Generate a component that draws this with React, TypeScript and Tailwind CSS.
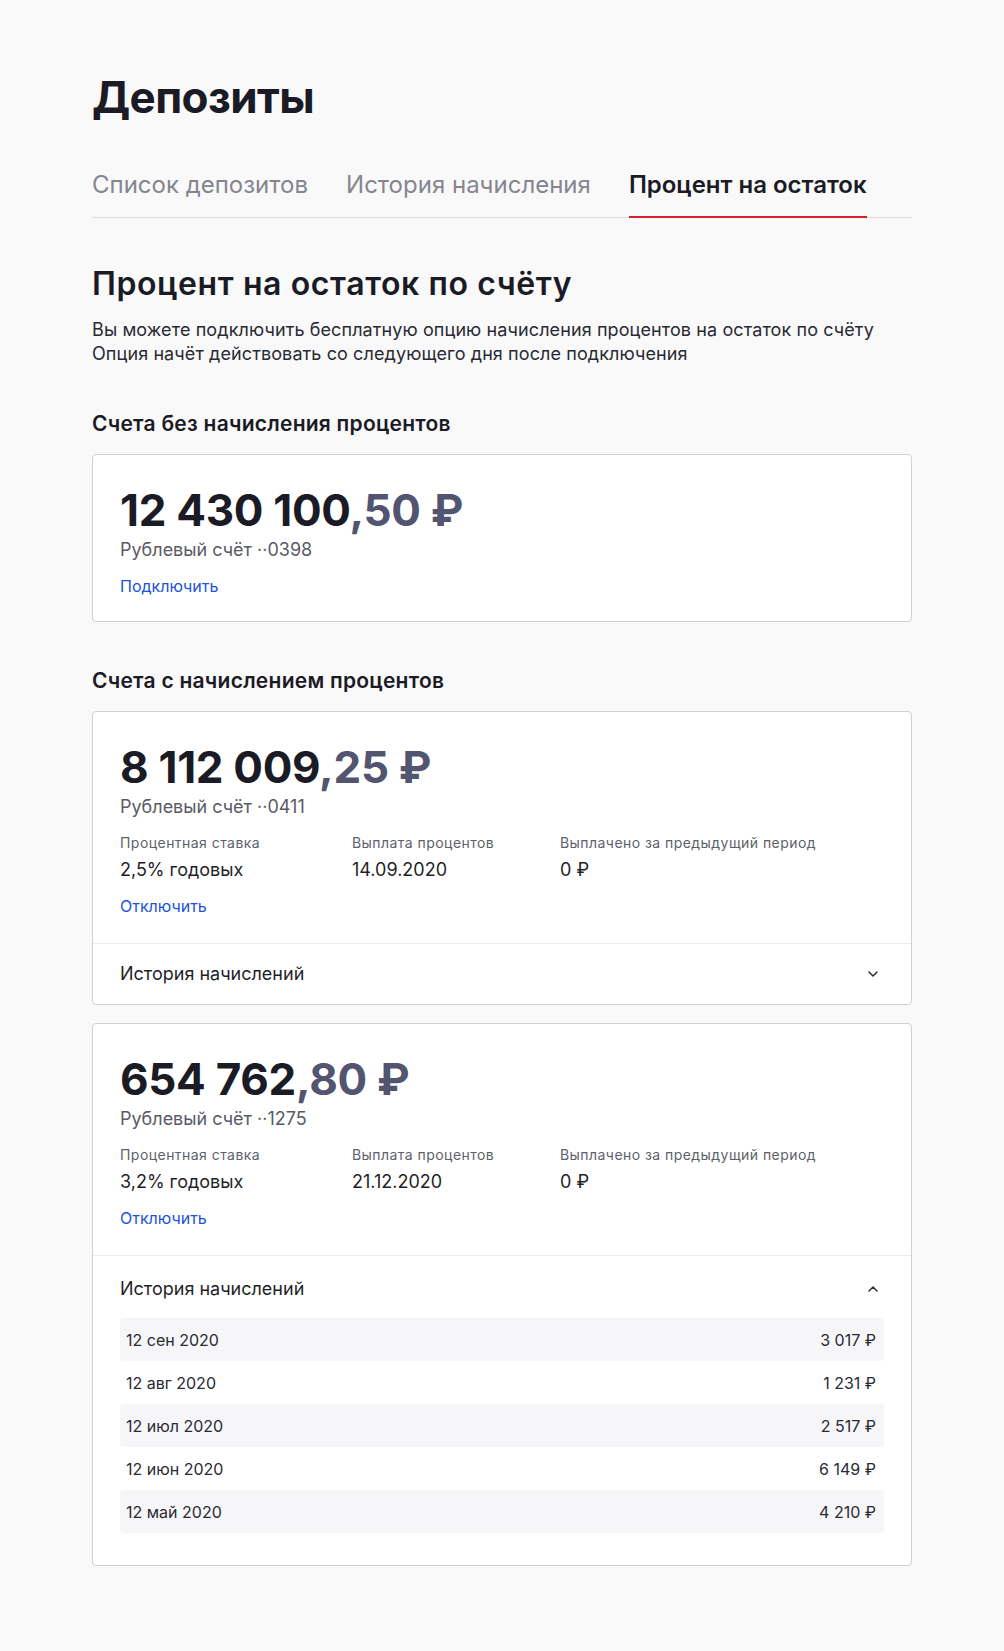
import { useState } from 'react';

const history = [
  { date: '12 сен 2020', amount: '3 017 ₽' },
  { date: '12 авг 2020', amount: '1 231 ₽' },
  { date: '12 июл 2020', amount: '2 517 ₽' },
  { date: '12 июн 2020', amount: '6 149 ₽' },
  { date: '12 май 2020', amount: '4 210 ₽' },
];

const Chevron = ({ up }: { up?: boolean }) => (
  <svg width="12" height="8" viewBox="0 0 12 8" fill="none" className={up ? 'rotate-180' : ''}>
    <path d="M2 2l4 4 4-4" stroke="#2a2a33" strokeWidth="1.5" strokeLinecap="round" strokeLinejoin="round" />
  </svg>
);

const Amount = ({ whole, cents }: { whole: string; cents: string }) => (
  <div className="text-[44px] leading-[52px] font-bold tracking-[-0.3px] text-[#1b1b26]">
    {whole}
    <span className="text-[#525470]">,{cents} ₽</span>
  </div>
);

type Acc = {
  whole: string;
  cents: string;
  num: string;
  rate: string;
  pay: string;
  open?: boolean;
};

const ActiveCard = ({ acc }: { acc: Acc }) => {
  const [open, setOpen] = useState(!!acc.open);
  return (
    <div className="bg-white border border-[#cfcfd6] rounded-[4px]">
      <div className="px-[27px] pt-[29px] pb-[25px]">
        <Amount whole={acc.whole} cents={acc.cents} />
        <div className="mt-0.5 text-[18px] leading-6 text-[#5a5a64]">Рублевый счёт ··{acc.num}</div>
        <div className="flex mt-[14px]">
          <div className="w-[232px]">
            <div className="text-[14px] leading-5 tracking-[0.45px] text-[#5f5f6b]">Процентная ставка</div>
            <div className="mt-[5px] text-[18px] leading-6 text-[#1f1f28]">{acc.rate}</div>
          </div>
          <div className="w-[208px]">
            <div className="text-[14px] leading-5 tracking-[0.45px] text-[#5f5f6b]">Выплата процентов</div>
            <div className="mt-[5px] text-[18px] leading-6 text-[#1f1f28]">{acc.pay}</div>
          </div>
          <div>
            <div className="text-[14px] leading-5 tracking-[0.45px] text-[#5f5f6b]">Выплачено за предыдущий период</div>
            <div className="mt-[5px] text-[18px] leading-6 text-[#1f1f28]">0 ₽</div>
          </div>
        </div>
        <div className="mt-3 text-[16px] leading-6 text-[#2152d9]">Отключить</div>
      </div>
      <div className="border-t border-[#ebebef]">
        {open ? (
          <div className="px-[27px] pt-[21px] pb-[32px]">
            <button onClick={() => setOpen(false)} className="w-full flex items-center justify-between">
              <span className="text-[18px] leading-6 text-[#1f1f28]">История начислений</span>
              <span className="mr-[5px]"><Chevron up /></span>
            </button>
            <div className="mt-[17px]">
              {history.map((h, i) => (
                <div
                  key={h.date}
                  className={`h-[43px] flex items-center justify-between pl-1.5 pr-2 rounded-[4px] text-[16px] text-[#2a2a33] ${
                    i % 2 === 0 ? 'bg-[#f6f6f9]' : ''
                  }`}
                >
                  <span>{h.date}</span>
                  <span>{h.amount}</span>
                </div>
              ))}
            </div>
          </div>
        ) : (
          <button onClick={() => setOpen(true)} className="w-full h-[60px] px-[27px] flex items-center justify-between">
            <span className="text-[18px] leading-6 text-[#1f1f28]">История начислений</span>
            <span className="mr-[5px]"><Chevron /></span>
          </button>
        )}
      </div>
    </div>
  );
};

export default function App() {
  const tabs = ['Список депозитов', 'История начисления', 'Процент на остаток'];

  return (
    <div className="min-h-screen bg-[#f9f9fa] font-['Inter','Noto_Sans',sans-serif] text-[#1b1b26]">
      <div className="mx-[92px] pt-[71px] pb-[86px]">
        <h1 className="text-[44px] leading-[52px] font-bold tracking-[-0.6px]">Депозиты</h1>

        {/* Tabs */}
        <div className="mt-[46px] flex gap-[38px] border-b border-[#dcdce1]">
          {tabs.map((t, i) => (
            <div
              key={t}
              className={`pb-[15px] text-[24px] leading-8 -mb-px ${
                i === 2
                  ? 'font-semibold text-[#1b1b26] border-b-2 border-[#d3202e]'
                  : 'text-[#85858f] border-b-2 border-transparent'
              }`}
            >
              {t}
            </div>
          ))}
        </div>

        <h2 className="mt-[46px] text-[32px] leading-10 font-semibold tracking-[0.6px]">Процент на остаток по счёту</h2>
        <p className="mt-[14px] text-[18px] leading-6 tracking-[0.1px] text-[#2a2a33]">
          Вы можете подключить бесплатную опцию начисления процентов на остаток по счёту
          <br />
          Опция начёт действовать со следующего дня после подключения
        </p>

        <h3 className="mt-[44px] text-[21px] leading-7 font-semibold tracking-[0.25px]">Счета без начисления процентов</h3>
        <div className="mt-4 bg-white border border-[#cfcfd6] rounded-[4px] px-[27px] pt-[29px] pb-[23px]">
          <Amount whole="12 430 100" cents="50" />
          <div className="mt-0.5 text-[18px] leading-6 text-[#5a5a64]">Рублевый счёт ··0398</div>
          <div className="mt-3 text-[16px] leading-6 text-[#2152d9]">Подключить</div>
        </div>

        <h3 className="mt-[45px] text-[21px] leading-7 font-semibold tracking-[0.25px]">Счета с начислением процентов</h3>
        <div className="mt-4 flex flex-col gap-[18px]">
          <ActiveCard acc={{ whole: '8 112 009', cents: '25', num: '0411', rate: '2,5% годовых', pay: '14.09.2020' }} />
          <ActiveCard acc={{ whole: '654 762', cents: '80', num: '1275', rate: '3,2% годовых', pay: '21.12.2020', open: true }} />
        </div>
      </div>
    </div>
  );
}
